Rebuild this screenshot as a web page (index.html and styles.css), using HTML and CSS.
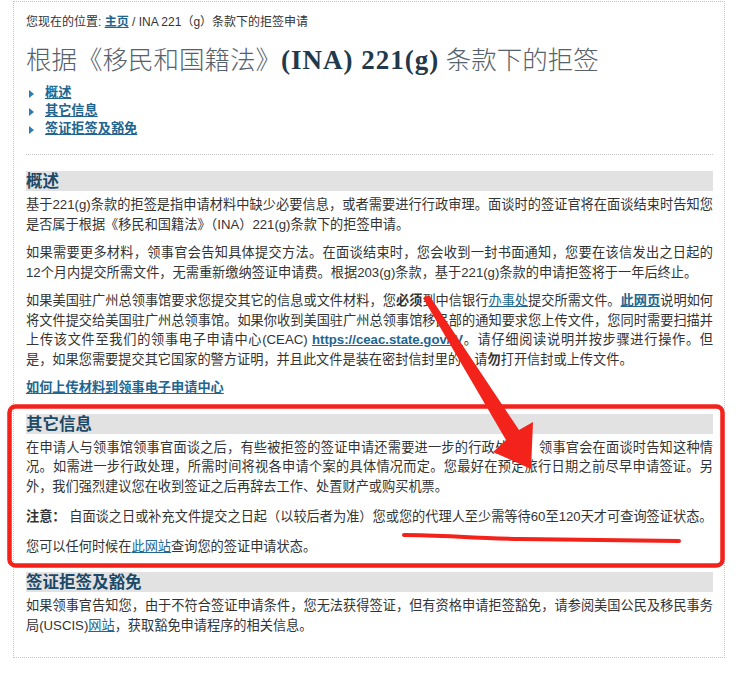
FILE: index.html
```html
<!DOCTYPE html>
<html lang="zh-CN">
<head>
  <meta charset="UTF-8" />
  <meta name="viewport" content="width=device-width, initial-scale=1.0"/>
  <title>根据《移民和国籍法》(INA) 221(g) 条款下的拒签</title>
  <link rel="stylesheet" href="styles.css">
</head>
<body>

  <div class="page">
    <div class="crumb">您现在的位置: <a href="#">主页</a> / INA 221（g）条款下的拒签申请</div>
    <h1>根据《移民和国籍法》<span class="latin">(INA) 221(g)</span> 条款下的拒签</h1>

    <ul class="toc">
      <li><a href="#overview">概述</a></li>
      <li><a href="#more">其它信息</a></li>
      <li><a href="#waiver">签证拒签及豁免</a></li>
    </ul>

    <div class="section" id="overview">
      <h3>概述</h3>
      <p>基于221(g)条款的拒签是指申请材料中缺少必要信息，或者需要进行行政审理。面谈时的签证官将在面谈结束时告知您是否属于根据《移民和国籍法》（INA）221(g)条款下的拒签申请。</p>
      <p>如果需要更多材料，领事官会告知具体提交方法。在面谈结束时，您会收到一封书面通知，您要在该信发出之日起的12个月内提交所需文件，无需重新缴纳签证申请费。根据203(g)条款，基于221(g)条款的申请拒签将于一年后终止。</p>
      <p>如果美国驻广州总领事馆要求您提交其它的信息或文件材料，您<b>必须</b>到中信银行<a href="#" class="plain">办事处</a>提交所需文件。<a href="#">此网页</a>说明如何将文件提交给美国驻广州总领事馆。如果你收到美国驻广州总领事馆移民部的通知要求您上传文件，您同时需要扫描并上传该文件至我们的领事电子申请中心(CEAC) <a href="#">https://ceac.state.gov/IV</a>。请仔细阅读说明并按步骤进行操作。但是，如果您需要提交其它国家的警方证明，并且此文件是装在密封信封里的，请<b>勿</b>打开信封或上传文件。</p>
      <p><a href="#">如何上传材料到领事电子申请中心</a></p>
    </div>

    <div class="section" id="more">
      <h3>其它信息</h3>
      <p>在申请人与领事馆领事官面谈之后，有些被拒签的签证申请还需要进一步的行政处理。 领事官会在面谈时告知这种情况。如需进一步行政处理，所需时间将视各申请个案的具体情况而定。您最好在预定旅行日期之前尽早申请签证。另外，我们强烈建议您在收到签证之后再辞去工作、处置财产或购买机票。</p>
      <p><b>注意：</b> 自面谈之日或补充文件提交之日起（以较后者为准）您或您的代理人至少需等待60至120天才可查询签证状态。</p>
      <p>您可以任何时候在<a href="#" class="plain">此网站</a>查询您的签证申请状态。</p>
    </div>

    <div class="section" id="waiver">
      <h3>签证拒签及豁免</h3>
      <p>如果领事官告知您，由于不符合签证申请条件，您无法获得签证，但有资格申请拒签豁免，请参阅美国公民及移民事务<span class="nowrap">局(USCIS)</span><a href="#" class="plain">网站</a>，获取豁免申请程序的相关信息。</p>
    </div>
  </div>

  <!-- red marks drawn over the screenshot -->
  <svg class="marks" width="736" height="691" viewBox="0 0 736 691">
    <rect x="9.5" y="406.5" width="713" height="159" rx="6" fill="none" stroke="#f3221b" stroke-width="4.5"/>
    <polygon points="423,298 429,295 519,430 533,422 531,469 493,452 506,440" fill="#f3221b"/>
    <path d="M404,535 C440,535 470,538 520,539 S620,540 679,541" fill="none" stroke="#f3221b" stroke-width="4" stroke-linecap="round"/>
  </svg>

</body>
</html>
```

FILE: styles.css
```css
body {
  margin: 0;
  font-family: "Liberation Sans", "Noto Sans CJK SC", sans-serif;
  font-size: 13.2px;
  color: #333;
  background: #fff;
  position: relative;
}

a {
  color: #22668f;
  font-weight: bold;
}

a.plain {
  font-weight: normal;
}

.page {
  margin: 1px 0 0 13px;
  width: 712px;
  height: 657px;
  box-sizing: border-box;
  border: 1px dotted #c6c6c6;
  padding: 11px 11px 0 12px;
}

.crumb {
  font-size: 12px;
  line-height: 18px;
}

h1 {
  margin: 12px 0 0;
  font-family: "Liberation Serif", "Noto Sans CJK SC", serif;
  font-size: 25.5px;
  font-weight: 300;
  line-height: 34px;
  color: #55626c;
}

h1 .latin {
  font-size: 27px;
  font-weight: bold;
  letter-spacing: 1px;
  color: #22394b;
}

.toc {
  list-style: none;
  margin: 6px 0 0;
  padding: 0 0 16px;
  border-bottom: 1px dotted #c6c6c6;
}

.toc li {
  line-height: 18px;
  padding-left: 3px;
}

.toc li::before {
  content: "";
  display: inline-block;
  border-left: 5px solid #2c7cb8;
  border-top: 4px solid transparent;
  border-bottom: 4px solid transparent;
  margin-right: 11px;
  vertical-align: -1px;
}

h3 {
  margin: 16px 0 4px;
  background: #e2e2e2;
  font-size: 16.5px;
  line-height: 20px;
  color: #1c4a68;
}

p {
  margin: 0 0 9px;
  line-height: 19.5px;
  text-align: justify;
}

#more p {
  margin-bottom: 10.5px;
}

.nowrap {
  white-space: nowrap;
}

.marks {
  position: absolute;
  top: 0;
  left: 0;
  pointer-events: none;
}
```
